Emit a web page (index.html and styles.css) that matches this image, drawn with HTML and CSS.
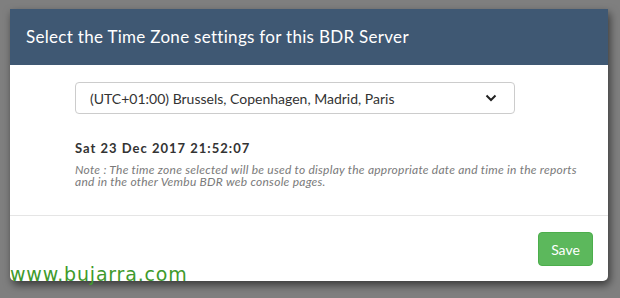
FILE: index.html
```html
<!DOCTYPE html>
<html>
<head>
<meta charset="utf-8">
<link rel="stylesheet" href="styles.css">
</head>
<body>
<div class="modal">
  <div class="modal-header">Select the Time Zone settings for this BDR Server</div>
  <div class="modal-body">
    <div class="select">
      <span>(UTC+01:00) Brussels, Copenhagen, Madrid, Paris</span>
      <svg width="12" height="8" viewBox="0 0 12 8"><path d="M1.5 1.5 L6 6 L10.5 1.5" fill="none" stroke="#222" stroke-width="2"/></svg>
    </div>
    <div class="date">Sat 23 Dec 2017 21:52:07</div>
    <div class="note">Note : The time zone selected will be used to display the appropriate date and time in the reports and in the other Vembu BDR web console pages.</div>
  </div>
  <div class="modal-footer">
    <button class="btn-save">Save</button>
  </div>
</div>
<div class="watermark">www.bujarra.com</div>
</body>
</html>
```
FILE: styles.css
```css
html, body { margin: 0; padding: 0; }
body {
  background: #7f7f7f;
  width: 620px;
  height: 298px;
  position: relative;
  overflow: hidden;
  font-family: Lato, "Liberation Sans", sans-serif;
  padding-top: 9px;
  padding-left: 10px;
  box-sizing: border-box;
}
.modal {
  width: 598px;
  height: 272px;
  background: #fff;
  border-radius: 0 0 5px 5px;
  box-shadow: 2px 4px 8px rgba(0,0,0,0.55);
  display: flex;
  flex-direction: column;
}
.modal-header {
  height: 56px;
  background: #3f5873;
  color: #fff;
  font-size: 17px;
  letter-spacing: 0.3px;
  display: flex;
  align-items: center;
  padding-left: 16px;
  padding-bottom: 1px;
  box-sizing: border-box;
}
.modal-body {
  padding: 17px 0 0 65px;
  height: 151px;
  box-sizing: border-box;
  border-bottom: 1px solid #e5e5e5;
}
.select {
  width: 440px;
  height: 32px;
  box-sizing: border-box;
  border: 1px solid #ccc;
  border-radius: 4px;
  display: flex;
  align-items: center;
  justify-content: space-between;
  padding: 0 17px 0 14px;
  font-size: 14px;
  color: #333;
}
.date {
  margin-top: 26px;
  font-weight: bold;
  font-size: 13px;
  letter-spacing: 1px;
  color: #333;
  line-height: 16px;
}
.note {
  margin-top: 8px;
  width: 520px;
  font-style: italic;
  font-size: 12px;
  letter-spacing: 0.25px;
  line-height: 12px;
  color: #7a7a7a;
}
.modal-footer {
  display: flex;
  justify-content: flex-end;
  padding: 16px 15px 0 0;
}
.btn-save {
  width: 55px;
  height: 34px;
  background: #5cb85c;
  border: 1px solid #4cae4c;
  border-radius: 4px;
  color: #fff;
  font-family: Lato, "Liberation Sans", sans-serif;
  font-size: 14px;
  padding: 0;
}
.watermark {
  position: absolute;
  left: 10px;
  top: 263px;
  font-family: "DejaVu Sans", sans-serif;
  font-size: 19px;
  letter-spacing: 0.8px;
  color: #3f9a2c;
}
```
